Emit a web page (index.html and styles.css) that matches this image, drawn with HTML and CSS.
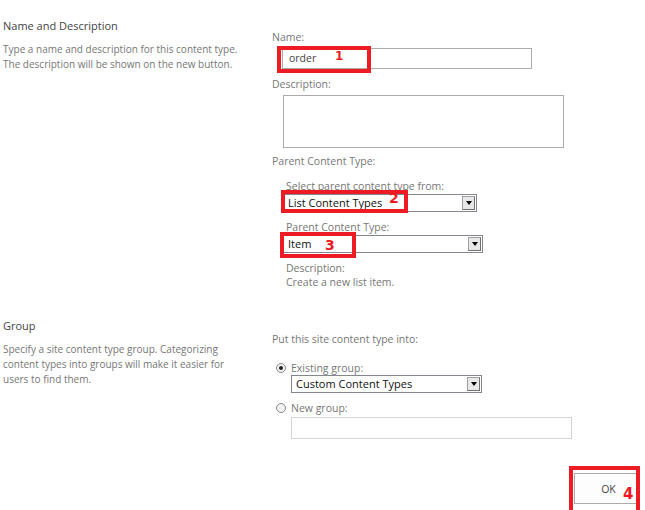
FILE: index.html
```html
<!DOCTYPE html>
<html>
<head>
<meta charset="utf-8">
<link rel="stylesheet" href="styles.css">
</head>
<body>
<div class="page">
  <section class="sec sec-name">
    <div class="info">
      <h3 class="title">Name and Description</h3>
      <p class="help">Type a name and description for this content type.<br>The description will be shown on the new button.</p>
    </div>
    <div class="fields">
      <div class="label">Name:</div>
      <div class="mark-wrap name-wrap">
        <div class="textbox name-box">order</div>
        <div class="mark mark1"><span class="num n1">1</span></div>
      </div>
      <div class="label desc-label">Description:</div>
      <div class="textarea"></div>
      <div class="label pct-label">Parent Content Type:</div>
      <div class="sub">
        <div class="label sub-label">Select parent content type from:</div>
        <div class="mark-wrap">
          <div class="select sel1"><span class="sel-text">List Content Types</span><span class="arrow"><i></i></span></div>
          <div class="mark mark2"><span class="num n2">2</span></div>
        </div>
        <div class="label sub-label2">Parent Content Type:</div>
        <div class="mark-wrap">
          <div class="select sel2"><span class="sel-text">Item</span><span class="arrow"><i></i></span></div>
          <div class="mark mark3"><span class="num n3">3</span></div>
        </div>
        <div class="label pd-label">Description:</div>
        <div class="label pd-text">Create a new list item.</div>
      </div>
    </div>
  </section>
  <section class="sec sec-group">
    <div class="info">
      <h3 class="title">Group</h3>
      <p class="help">Specify a site content type group. Categorizing content types into groups will make it easier for users to find them.</p>
    </div>
    <div class="fields">
      <div class="label put-label">Put this site content type into:</div>
      <div class="radio-row r1"><span class="radio checked"></span><span class="label">Existing group:</span></div>
      <div class="select sel3"><span class="sel-text">Custom Content Types</span><span class="arrow"><i></i></span></div>
      <div class="radio-row r2"><span class="radio"></span><span class="label">New group:</span></div>
      <div class="textbox group-box"></div>
    </div>
  </section>
  <div class="actions">
    <div class="mark-wrap ok-wrap">
      <button class="ok">OK</button>
      <div class="mark mark4"><span class="num n4">4</span></div>
    </div>
  </div>
</div>
</body>
</html>
```
FILE: styles.css
```css
* { box-sizing: border-box; }
html, body { margin: 0; padding: 0; background: #fff; }
body {
  width: 645px;
  height: 510px;
  overflow: hidden;
  font-family: "Open Sans", "Noto Sans", sans-serif;
  font-size: 10px;
  color: #777;
}
.page { position: relative; }
.sec {
  display: grid;
  grid-template-columns: 272px 1fr;
}
.sec-name { padding-top: 18px; height: 318px; }
.sec-group { padding-top: 0; }
.info { padding-left: 3px; }
.title {
  margin: 0;
  font-weight: normal;
  font-size: 11px;
  line-height: 16px;
  color: #444;
}
.help {
  margin: 8px 0 0;
  font-size: 10px;
  line-height: 15px;
  color: #777;
  width: 240px;
}
.fields { padding-top: 12px; }
.label {
  font-size: 10.5px;
  line-height: 14px;
  color: #777;
}
.mark-wrap { position: relative; }
.textbox {
  border: 1px solid #ababab;
  height: 21px;
  background: #fff;
  font-size: 10.5px;
  color: #444;
  line-height: 19px;
}
.name-box {
  margin-left: 10px;
  width: 250px;
  margin-top: 4px;
  padding-left: 6px;
  display: flex;
  align-items: center;
}
.desc-label { margin-top: 8px; }
.textarea {
  margin-left: 11px;
  margin-top: 4px;
  width: 281px;
  height: 53px;
  border: 1px solid #ababab;
}
.pct-label { margin-top: 6px; }
.sub { padding-left: 14px; }
.sub-label { margin-top: 11px; }
.select {
  display: flex;
  align-items: stretch;
  border: 1px solid #828790;
  height: 18px;
  background: #fff;
  color: #111;
  font-size: 11px;
}
.sel-text { flex: 1; padding-left: 4px; line-height: 16px; }
.arrow {
  width: 13px;
  margin: 1px;
  background: #e8e8e8;
  border: 1px solid #a0a0a0;
  border-right-color: #707070;
  border-bottom-color: #707070;
  display: flex;
  align-items: center;
  justify-content: center;
}
.arrow i {
  display: block;
  width: 0; height: 0;
  border-left: 3px solid transparent;
  border-right: 3px solid transparent;
  border-top: 4px solid #000;
}
.sel1 { width: 194px; margin-top: 1px; margin-left: -3px; }
.sub-label2 { margin-top: 8px; }
.sel2 { width: 200px; margin-top: 1px; margin-left: -3px; }
.pd-label { margin-top: 8px; }
.pd-text { margin-top: 0; }

.mark {
  position: absolute;
  border: 4px solid #ed1c24;
}
.num {
  position: absolute;
  color: #ed1c24;
  font-family: "DejaVu Sans", sans-serif;
  font-weight: bold;
  font-size: 14px;
  line-height: 14px;
}
.mark1 { left: 5px; top: -2px; width: 94px; height: 27px; }
.n1 { left: 54px; top: -1px; font-size: 12px; }
.mark2 { left: -5px; top: -4px; width: 127px; height: 23px; }
.n2 { left: 104px; top: -3px; }
.mark3 { left: -6px; top: -3px; width: 76px; height: 26px; }
.n3 { left: 41px; top: 2px; }

.put-label { margin-top: 2px; }
.radio-row { display: flex; align-items: center; margin-left: 4px; }
.radio {
  width: 10px; height: 10px;
  border-radius: 50%;
  border: 1px solid #8a8a8a;
  background: #f2f2f2;
  margin-right: 5px;
  position: relative;
}
.radio.checked::after {
  content: "";
  position: absolute;
  left: 2px; top: 2px;
  width: 4px; height: 4px;
  border-radius: 50%;
  background: #222;
}
.r1 { margin-top: 15px; }
.sel3 { margin-left: 19px; width: 191px; margin-top: 0; }
.r2 { margin-top: 8px; }
.group-box { margin-left: 19px; width: 281px; height: 22px; border-color: #d5d5d5; margin-top: 2px; }

.actions {
  position: absolute;
  left: 0; right: 0; top: 466px;
  display: flex;
  justify-content: flex-end;
  padding-right: 5px;
}
.ok {
  width: 63px;
  height: 31px;
  margin-top: 7px;
  margin-right: 3px;
  padding-left: 6px;
  padding-right: 0;
  background: #fdfdfd;
  border: 1px solid #ababab;
  font-family: "Open Sans", sans-serif;
  font-size: 10.5px;
  color: #444;
}
.mark4 { left: -5px; top: 0; width: 71px; height: 48px; }
.n4 { left: 50px; top: 17px; font-size: 15px; }
```
